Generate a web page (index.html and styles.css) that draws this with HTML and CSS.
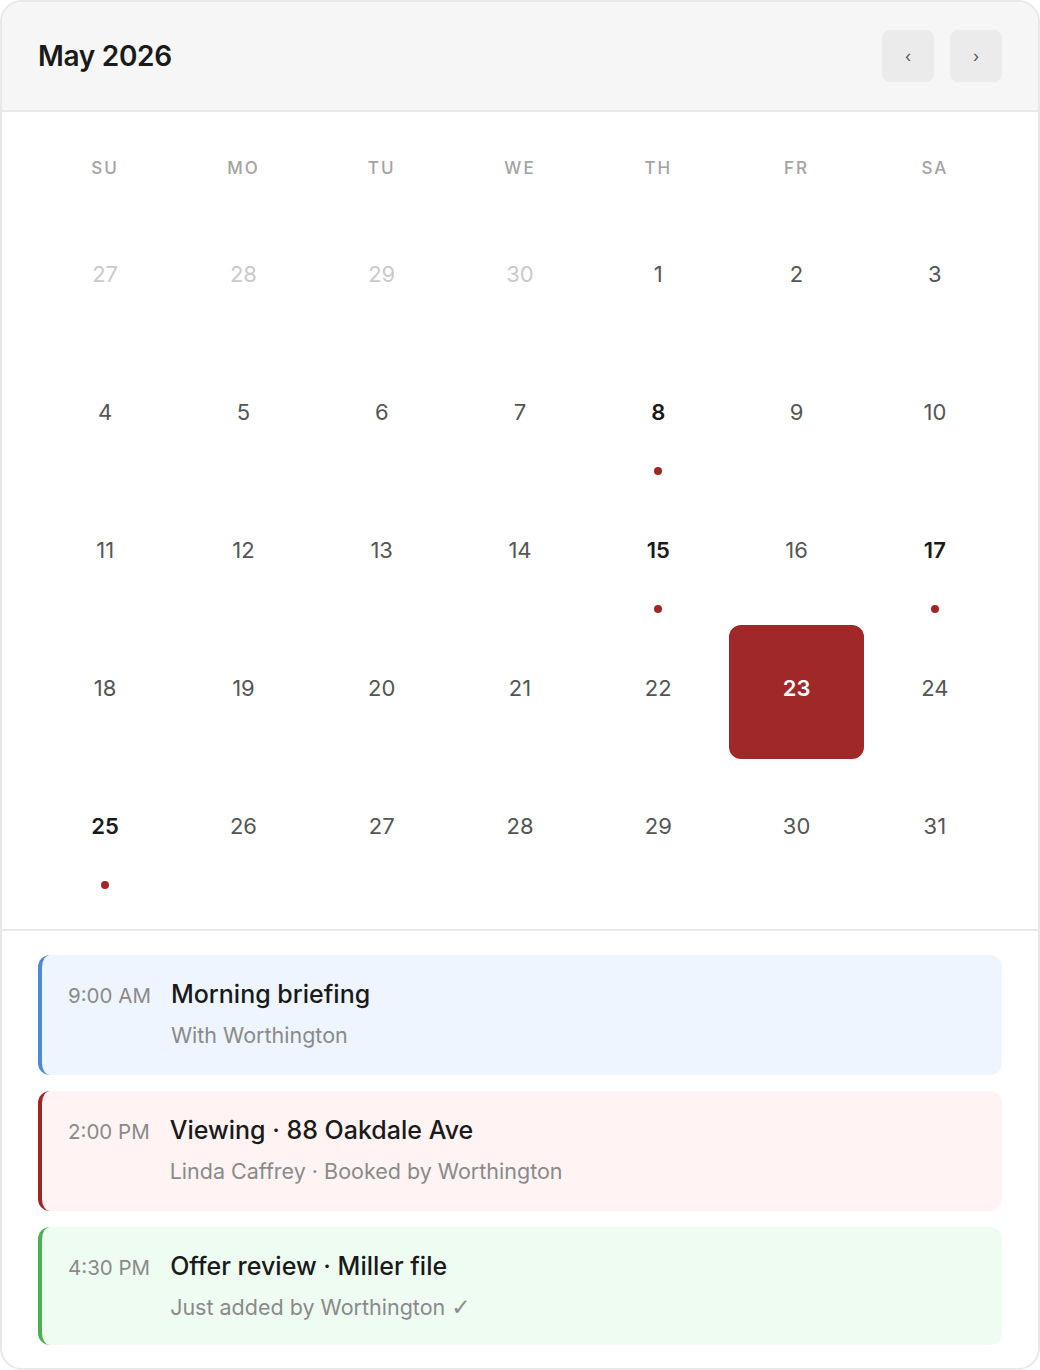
FILE: index.html
```html
<!DOCTYPE html>
<html lang="en">
<head>
  <meta charset="UTF-8" />
  <meta name="viewport" content="width=device-width, initial-scale=1.0" />
  <title>Calendar - May 2026</title>
  <link rel="stylesheet" href="styles.css">
</head>
<body>
  <div class="calendar">
    <div class="cal-header">
      <h1 class="month">May 2026</h1>
      <div class="nav">
        <button class="nav-btn">‹</button>
        <button class="nav-btn">›</button>
      </div>
    </div>

    <div class="cal-body">
      <div class="weekdays">
        <span>SU</span><span>MO</span><span>TU</span><span>WE</span><span>TH</span><span>FR</span><span>SA</span>
      </div>
      <div class="days">
        <div class="day muted">27</div>
        <div class="day muted">28</div>
        <div class="day muted">29</div>
        <div class="day muted">30</div>
        <div class="day">1</div>
        <div class="day">2</div>
        <div class="day">3</div>

        <div class="day">4</div>
        <div class="day">5</div>
        <div class="day">6</div>
        <div class="day">7</div>
        <div class="day has-event">8</div>
        <div class="day">9</div>
        <div class="day">10</div>

        <div class="day">11</div>
        <div class="day">12</div>
        <div class="day">13</div>
        <div class="day">14</div>
        <div class="day has-event">15</div>
        <div class="day">16</div>
        <div class="day has-event">17</div>

        <div class="day">18</div>
        <div class="day">19</div>
        <div class="day">20</div>
        <div class="day">21</div>
        <div class="day">22</div>
        <div class="day selected">23</div>
        <div class="day">24</div>

        <div class="day has-event">25</div>
        <div class="day">26</div>
        <div class="day">27</div>
        <div class="day">28</div>
        <div class="day">29</div>
        <div class="day">30</div>
        <div class="day">31</div>
      </div>
    </div>

    <div class="events">
      <div class="event blue">
        <span class="time">9:00 AM</span>
        <div class="info">
          <div class="title">Morning briefing</div>
          <div class="sub">With Worthington</div>
        </div>
      </div>
      <div class="event red">
        <span class="time">2:00 PM</span>
        <div class="info">
          <div class="title">Viewing · 88 Oakdale Ave</div>
          <div class="sub">Linda Caffrey · Booked by Worthington</div>
        </div>
      </div>
      <div class="event green">
        <span class="time">4:30 PM</span>
        <div class="info">
          <div class="title">Offer review · Miller file</div>
          <div class="sub">Just added by Worthington <span class="check">✓</span></div>
        </div>
      </div>
    </div>
  </div>
</body>
</html>
```

FILE: styles.css
```css
* {
    box-sizing: border-box;
}

body {
    margin: 0;
    font-family: Inter, "Noto Sans", sans-serif;
    background-color: #fff;
    color: #1a1a1a;
}

.calendar {
    width: 1040px;
    height: 1370px;
    border: 2px solid #e8e8e8;
    border-radius: 22px;
    overflow: hidden;
    background-color: #fff;
}

.cal-header {
    height: 110px;
    display: flex;
    align-items: center;
    justify-content: space-between;
    padding: 0 36px;
    background-color: #f6f6f6;
    border-bottom: 2px solid #e8e8e8;
}

.month {
    margin: 0;
    font-size: 28px;
    font-weight: 600;
    letter-spacing: -0.3px;
}

.nav {
    display: flex;
    gap: 16px;
}

.nav-btn {
    width: 52px;
    height: 52px;
    border: none;
    border-radius: 8px;
    background-color: #ebebeb;
    color: #555;
    font-size: 16px;
    font-family: inherit;
    cursor: pointer;
}

.cal-body {
    padding: 36px 36px 32px;
    border-bottom: 2px solid #e8e8e8;
}

.weekdays {
    display: grid;
    grid-template-columns: repeat(7, 1fr);
    gap: 4px;
    height: 40px;
    margin-bottom: 23px;
    align-items: center;
    text-align: center;
    font-size: 17px;
    font-weight: 500;
    letter-spacing: 2px;
    color: #a3a3a3;
}

.days {
    display: grid;
    grid-template-columns: repeat(7, 1fr);
    gap: 4px;
}

.day {
    position: relative;
    height: 134px;
    display: flex;
    align-items: center;
    justify-content: center;
    padding-bottom: 8px;
    font-size: 22px;
    font-weight: 400;
    color: #555;
    border-radius: 12px;
}

.day.muted {
    color: #cacaca;
}

.day.has-event {
    color: #1a1a1a;
    font-weight: 600;
}

.day.has-event::after {
    content: "";
    position: absolute;
    left: 50%;
    bottom: 8px;
    width: 8px;
    height: 8px;
    margin-left: -4px;
    border-radius: 50%;
    background-color: #a02626;
}

.day.selected {
    background-color: #a02828;
    color: #fff;
    font-weight: 600;
}

.events {
    padding: 24px 36px;
    display: flex;
    flex-direction: column;
    gap: 16px;
}

.event {
    display: flex;
    align-items: baseline;
    gap: 20px;
    height: 120px;
    padding: 23px 26px;
    border-left: 4px solid;
    border-radius: 12px;
}

.event.blue {
    background-color: #eef5ff;
    border-color: #4a8ad6;
}

.event.red {
    background-color: #fff3f3;
    border-color: #a02626;
}

.event.green {
    background-color: #eefcf2;
    border-color: #4caf50;
    height: 118px;
}

.time {
    font-size: 20.5px;
    color: #8a8a8a;
}

.title {
    font-size: 25px;
    font-weight: 500;
    line-height: 32px;
}

.sub {
    margin-top: 10px;
    font-size: 21.5px;
    line-height: 30px;
    color: #8a8a8a;
}

.check {
    font-family: "DejaVu Sans", sans-serif;
    font-size: 23px;
}
```
